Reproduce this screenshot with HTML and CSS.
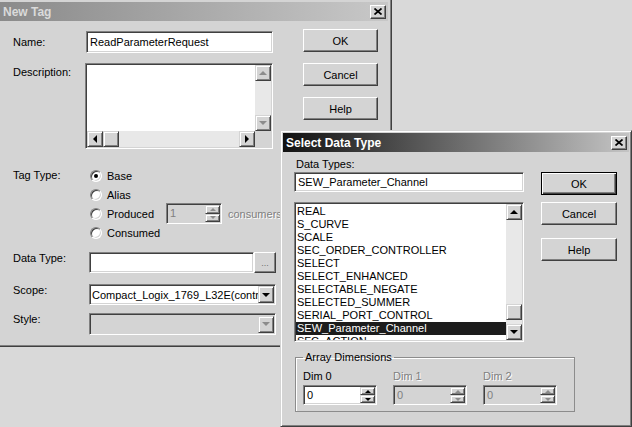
FILE: index.html
```html
<!DOCTYPE html>
<html lang="en">
<head>
    <meta charset="UTF-8">
    <meta name="viewport" content="width=device-width, initial-scale=1.0">
    <title>New Tag</title>
    <link rel="stylesheet" href="styles.css">
</head>
<body>
    <div class="window new-tag">
        <div class="titlebar inactive">
            <span class="title">New Tag</span>
            <span class="close-btn"><svg width="8" height="7" viewBox="0 0 8 7"><path d="M0.5 0.5 L7.5 6.5 M7.5 0.5 L0.5 6.5"/></svg></span>
        </div>
        <div class="tag-body">
            <div class="tag-form">
                <div class="row name-row">
                    <span class="lbl">Name:</span>
                    <div class="field text-field name-field">ReadParameterRequest</div>
                </div>
                <div class="row desc-row">
                    <span class="lbl">Description:</span>
                    <div class="field memo">
                        <div class="memo-area"></div>
                        <div class="vbar">
                            <span class="sb-btn"><i class="arr up off"></i></span>
                            <span class="sb-track"></span>
                            <span class="sb-btn"><i class="arr down off"></i></span>
                        </div>
                        <div class="hbar">
                            <span class="sb-btn"><i class="arr left"></i></span>
                            <span class="sb-btn"></span>
                            <span class="sb-track"></span>
                            <span class="sb-btn"><i class="arr right"></i></span>
                        </div>
                        <div class="sb-corner"></div>
                    </div>
                </div>
                <div class="row type-row">
                    <span class="lbl">Tag Type:</span>
                    <div class="radios">
                        <div class="radio-row"><span class="radio checked"></span><span class="rtext">Base</span></div>
                        <div class="radio-row"><span class="radio"></span><span class="rtext">Alias</span></div>
                        <div class="radio-row">
                            <span class="radio"></span><span class="rtext">Produced</span>
                            <div class="field spin disabled consumers-spin">
                                <span class="spin-val">1</span>
                                <span class="spin-btns">
                                    <span class="sp-btn"><i class="sarr up off"></i></span>
                                    <span class="sp-btn"><i class="sarr down off"></i></span>
                                </span>
                            </div>
                            <span class="dis-text consumers">consumers</span>
                        </div>
                        <div class="radio-row"><span class="radio"></span><span class="rtext">Consumed</span></div>
                    </div>
                </div>
                <div class="row data-row">
                    <span class="lbl">Data Type:</span>
                    <div class="field text-field data-field"></div>
                    <span class="btn browse-btn">...</span>
                </div>
                <div class="row scope-row">
                    <span class="lbl">Scope:</span>
                    <div class="field combo">
                        <span class="combo-text">Compact_Logix_1769_L32E(controller)</span>
                        <span class="sb-btn drop"><i class="arr down"></i></span>
                    </div>
                </div>
                <div class="row style-row">
                    <span class="lbl">Style:</span>
                    <div class="field combo disabled">
                        <span class="combo-text"></span>
                        <span class="sb-btn drop"><i class="arr down off"></i></span>
                    </div>
                </div>
            </div>
            <div class="tag-buttons">
                <span class="btn">OK</span>
                <span class="btn">Cancel</span>
                <span class="btn">Help</span>
            </div>
        </div>
    </div>

    <div class="window select-type">
        <div class="titlebar active">
            <span class="title">Select Data Type</span>
            <span class="close-btn"><svg width="8" height="7" viewBox="0 0 8 7"><path d="M0.5 0.5 L7.5 6.5 M7.5 0.5 L0.5 6.5"/></svg></span>
        </div>
        <div class="select-body">
            <div class="select-top">
                <div class="select-left">
                    <div class="types-lbl">Data Types:</div>
                    <div class="field text-field types-field">SEW_Parameter_Channel</div>
                    <div class="field listbox">
                        <ul class="items">
                            <li>REAL</li>
                            <li>S_CURVE</li>
                            <li>SCALE</li>
                            <li>SEC_ORDER_CONTROLLER</li>
                            <li>SELECT</li>
                            <li>SELECT_ENHANCED</li>
                            <li>SELECTABLE_NEGATE</li>
                            <li>SELECTED_SUMMER</li>
                            <li>SERIAL_PORT_CONTROL</li>
                            <li class="selected">SEW_Parameter_Channel</li>
                            <li>SFC_ACTION</li>
                        </ul>
                        <div class="vbar">
                            <span class="sb-btn"><i class="arr up"></i></span>
                            <span class="sb-btn thumb"></span>
                            <span class="sb-btn"><i class="arr down"></i></span>
                        </div>
                    </div>
                </div>
                <div class="select-buttons">
                    <span class="btn default-btn">OK</span>
                    <span class="btn cancel-btn">Cancel</span>
                    <span class="btn help-btn">Help</span>
                </div>
            </div>
            <fieldset class="dims">
                <legend>Array Dimensions</legend>
                <div class="dim-cols">
                    <div class="dim">
                        <div class="dim-lbl">Dim 0</div>
                        <div class="field spin">
                            <span class="spin-val">0</span>
                            <span class="spin-btns">
                                <span class="sp-btn"><i class="sarr up"></i></span>
                                <span class="sp-btn"><i class="sarr down"></i></span>
                            </span>
                        </div>
                    </div>
                    <div class="dim">
                        <div class="dim-lbl dis-text">Dim 1</div>
                        <div class="field spin disabled">
                            <span class="spin-val">0</span>
                            <span class="spin-btns">
                                <span class="sp-btn"><i class="sarr up off"></i></span>
                                <span class="sp-btn"><i class="sarr down off"></i></span>
                            </span>
                        </div>
                    </div>
                    <div class="dim">
                        <div class="dim-lbl dis-text">Dim 2</div>
                        <div class="field spin disabled">
                            <span class="spin-val">0</span>
                            <span class="spin-btns">
                                <span class="sp-btn"><i class="sarr up off"></i></span>
                                <span class="sp-btn"><i class="sarr down off"></i></span>
                            </span>
                        </div>
                    </div>
                </div>
            </fieldset>
        </div>
    </div>
</body>
</html>
```

FILE: styles.css
```css
* {
    box-sizing: border-box;
}

body {
    margin: 0;
    width: 632px;
    height: 427px;
    overflow: hidden;
    position: relative;
    background-color: #d9d9d9;
    font-family: "Liberation Sans", Arial, sans-serif;
    font-size: 11px;
    color: #000;
}

/* windows */
.window {
    position: absolute;
    background-color: #d4d4d4;
}

.new-tag {
    left: 0;
    top: 0;
    width: 392px;
    height: 347px;
    padding: 2px 3px 0 0;
    border-right: 1px solid #404040;
    border-bottom: 1px solid #404040;
    box-shadow: inset -1px -1px #808080;
}

.select-type {
    left: 280px;
    top: 130px;
    width: 352px;
    height: 297px;
    padding: 2px;
    border: 1px solid;
    border-color: #d4d4d4 #404040 #404040 #d4d4d4;
    box-shadow: inset 1px 1px #fff, inset -1px -1px #808080;
}

.titlebar {
    height: 19px;
    display: flex;
    align-items: center;
    justify-content: space-between;
    padding: 0 2px 0 3px;
    font-size: 12px;
    font-weight: bold;
}

.titlebar.inactive {
    background: linear-gradient(to right, #8a8a8a, #c8c8c8);
    color: #dadada;
}

.titlebar.active {
    background: linear-gradient(to right, #111, #c4c4c4);
    color: #fff;
}

.close-btn {
    width: 16px;
    height: 14px;
    display: flex;
    align-items: center;
    justify-content: center;
    background-color: #d4d4d4;
    border: 1px solid;
    border-color: #fff #404040 #404040 #fff;
    box-shadow: inset -1px -1px #808080;
}

.close-btn path {
    stroke: #000;
    stroke-width: 1.7;
    fill: none;
}

/* common controls */
.field {
    background-color: #fff;
    padding: 1px;
    border: 1px solid;
    border-color: #808080 #fff #fff #808080;
    box-shadow: inset 1px 1px #404040, inset -1px -1px #d4d4d4;
}

.field.disabled {
    background-color: #d4d4d4;
    color: #808080;
}

.text-field {
    padding: 0 3px;
    display: flex;
    align-items: center;
    white-space: nowrap;
    overflow: hidden;
}

.btn {
    display: flex;
    align-items: center;
    justify-content: center;
    height: 23px;
    background-color: #d4d4d4;
    border: 1px solid;
    border-color: #fff #404040 #404040 #fff;
    box-shadow: inset -1px -1px #808080;
}

.sb-btn {
    width: 16px;
    height: 16px;
    flex: none;
    display: flex;
    align-items: center;
    justify-content: center;
    background-color: #d4d4d4;
    border: 1px solid;
    border-color: #d4d4d4 #404040 #404040 #d4d4d4;
    box-shadow: inset 1px 1px #fff, inset -1px -1px #808080;
}

.sb-track {
    flex: 1;
    background-color: #e8e8e8;
}

.arr {
    width: 0;
    height: 0;
    border: 4px solid transparent;
}

.arr.up {
    border-top-width: 0;
    border-bottom-color: #000;
}

.arr.down {
    border-bottom-width: 0;
    border-top-color: #000;
}

.arr.left {
    border-left-width: 0;
    border-right-color: #000;
}

.arr.right {
    border-right-width: 0;
    border-left-color: #000;
}

.arr.up.off {
    border-bottom-color: #8c8c8c;
}

.arr.down.off {
    border-top-color: #8c8c8c;
}

.dis-text {
    color: #808080;
    text-shadow: 1px 1px #fff;
}

/* spinners */
.spin {
    display: flex;
    height: 21px;
}

.spin-val {
    flex: 1;
    padding-left: 2px;
    line-height: 17px;
}

.spin-btns {
    width: 15px;
    display: flex;
    flex-direction: column;
}

.sp-btn {
    flex: 1;
    display: flex;
    align-items: center;
    justify-content: center;
    background-color: #d4d4d4;
    border: 1px solid;
    border-color: #d4d4d4 #404040 #404040 #d4d4d4;
    box-shadow: inset 1px 1px #fff, inset -1px -1px #808080;
}

.sarr {
    width: 0;
    height: 0;
    border: 3px solid transparent;
}

.sarr.up {
    border-top-width: 0;
    border-bottom-color: #000;
}

.sarr.down {
    border-bottom-width: 0;
    border-top-color: #000;
}

.sarr.up.off {
    border-bottom-color: #8c8c8c;
}

.sarr.down.off {
    border-top-color: #8c8c8c;
}

/* New Tag dialog */
.tag-body {
    display: flex;
    padding: 8px 0 0 13px;
}

.tag-form {
    width: 263px;
    padding-top: 2px;
}

.tag-buttons {
    width: 75px;
    margin-left: 27px;
    display: flex;
    flex-direction: column;
    gap: 11px;
}

.row {
    display: flex;
}

.lbl {
    width: 76px;
    flex: none;
    line-height: 13px;
}

.name-row {
    height: 22px;
    align-items: center;
}

.name-field {
    width: 187px;
    height: 22px;
    margin-left: -3px;
}

.desc-row {
    margin-top: 10px;
}

.desc-row .lbl {
    padding-top: 3px;
}

.memo {
    width: 188px;
    height: 86px;
    margin-left: -4px;
    display: grid;
    grid-template-columns: 1fr 16px;
    grid-template-rows: 1fr 16px;
}

.vbar {
    display: flex;
    flex-direction: column;
    background-color: #e8e8e8;
}

.hbar {
    display: flex;
}

.sb-corner {
    background-color: #d4d4d4;
}

.type-row {
    margin-top: 17px;
}

.type-row .lbl {
    line-height: 19px;
}

.radio-row {
    height: 19px;
    display: flex;
    align-items: center;
}

.radio {
    width: 12px;
    height: 12px;
    flex: none;
    margin-left: 1px;
    display: flex;
    align-items: center;
    justify-content: center;
    border-radius: 50%;
    background-color: #fff;
    border: 1px solid;
    border-color: #808080 #fff #fff #808080;
    box-shadow: inset 1px 1px #404040, inset -1px -1px #d4d4d4;
}

.radio.checked::after {
    content: "";
    width: 4px;
    height: 4px;
    border-radius: 50%;
    background-color: #000;
}

.rtext {
    margin-left: 5px;
    width: 59px;
}

.consumers-spin {
    width: 56px;
    margin: -1px 0;
}

.consumers {
    margin-left: 6px;
}

.data-row {
    margin-top: 10px;
    height: 21px;
}

.data-field {
    width: 165px;
}

.browse-btn {
    width: 22px;
    height: 21px;
    align-items: flex-end;
    padding-bottom: 4px;
    font-size: 9px;
    color: #707070;
}

.scope-row {
    margin-top: 11px;
    height: 21px;
}

.style-row {
    margin-top: 8px;
    height: 22px;
}

.combo {
    width: 187px;
    display: flex;
    align-items: center;
}

.combo-text {
    flex: 1;
    padding-left: 1px;
    white-space: nowrap;
    overflow: hidden;
}

.combo .drop {
    height: 17px;
}

/* Select Data Type dialog */
.select-body {
    padding-left: 11px;
}

.select-top {
    display: flex;
}

.select-left {
    width: 230px;
    padding-top: 6px;
}

.types-lbl {
    line-height: 13px;
    padding-left: 2px;
}

.types-field {
    height: 20px;
    margin-top: 1px;
}

.listbox {
    height: 140px;
    margin-top: 10px;
    display: grid;
    grid-template-columns: 1fr 16px;
}

.items {
    list-style: none;
    margin: 0;
    padding: 1px 0 0;
    overflow: hidden;
}

.items li {
    height: 13px;
    line-height: 13px;
    padding-left: 1px;
    white-space: nowrap;
}

.items li.selected {
    background-color: #1c1c1c;
    color: #fff;
}

.listbox .vbar .thumb {
    margin-top: auto;
    margin-bottom: 4px;
}

.select-buttons {
    width: 76px;
    margin-left: 17px;
    padding-top: 20px;
    display: flex;
    flex-direction: column;
}

.default-btn {
    border-color: #000;
    box-shadow: inset 1px 1px #fff, inset -1px -1px #404040, inset -2px -2px #808080;
}

.cancel-btn {
    margin-top: 7px;
}

.help-btn {
    margin-top: 13px;
}

.dims {
    width: 280px;
    height: 61px;
    margin: 9px 0 0 1px;
    padding: 0 0 0 7px;
    border: 1px solid #8c8c8c;
    box-shadow: inset 1px 1px #fff;
}

.dims legend {
    padding: 0 2px;
    line-height: 13px;
}

.dim-cols {
    display: flex;
}

.dim {
    width: 90px;
    flex: none;
}

.dim-lbl {
    margin-top: 6px;
    line-height: 13px;
}

.dim .spin {
    width: 74px;
    height: 20px;
    margin-top: 2px;
}
```
